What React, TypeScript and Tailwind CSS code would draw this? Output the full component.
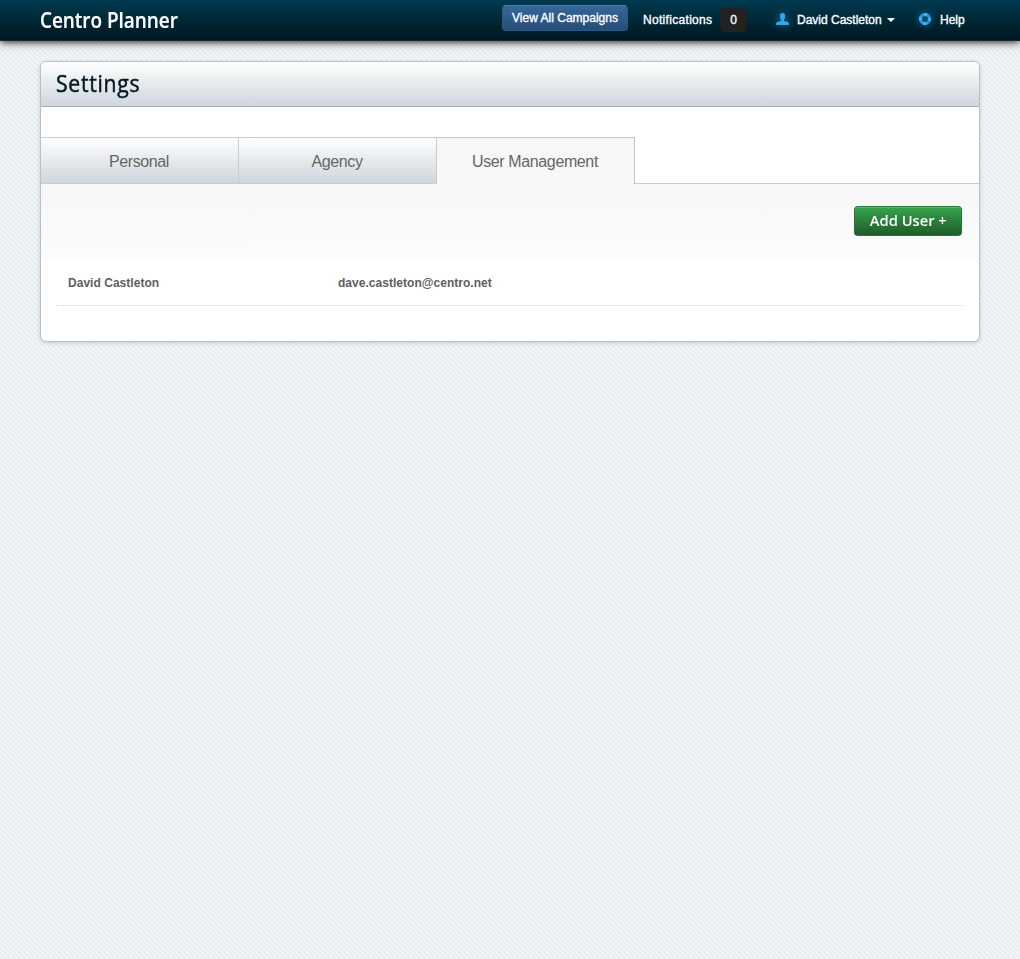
import React from 'react';

const tabs = ['Personal', 'Agency', 'User Management'];
const users = [{ name: 'David Castleton', email: 'dave.castleton@centro.net' }];

function Header() {
  return (
    <header className="relative flex h-[41px] shrink-0 items-start border-b border-[#252525] bg-gradient-to-b from-[#003a50] to-[#001720] px-10 text-white shadow-[0_1px_8px_rgba(0,0,0,0.9)]">
      <h1 className="h-10 w-[462px] origin-left scale-x-[0.9] whitespace-nowrap font-['Open_Sans',sans-serif] text-[21px] font-semibold leading-[40px] [-webkit-text-stroke:0.2px_white]">
        Centro Planner
      </h1>
      <nav className="flex items-start whitespace-nowrap text-[12px] leading-[40px] [-webkit-text-stroke:0.35px_white]">
        <a className="mt-[5px] flex h-[26px] w-[126px] items-center justify-center rounded-[4px] border border-[#2c5a84] border-t-[#4d7ba3] bg-gradient-to-b from-[#35689a] to-[#264e75] leading-[24px]">
          View All Campaigns
        </a>
        <span className="ml-[15px] w-[77px] tracking-[0.31px]">Notifications</span>
        <span className="mt-2 flex h-6 w-[27px] items-center justify-center rounded-[5px] bg-[#222] leading-6">0</span>
        <svg className="ml-[29px] mt-[13px] drop-shadow-[0_0_4px_#0878b8]" width="13" height="12" viewBox="0 0 13 12" fill="#35a5ee">
          <path d="M4 2Q4 0 6.5 0T9 2V4Q9 6 8 6.5V8L12 9Q13 9.5 13 12H0Q0 9.500 1 9L5 8V6.500Q4 6 4 4Z" />
        </svg>
        <span className="ml-2 w-[90px]">David Castleton</span>
        <svg className="mt-[18px]" width="8" height="4" viewBox="0 0 8 4" fill="white"><path d="M0 0H8L4 4Z" /></svg>
        <svg className="ml-6 mt-[13px] drop-shadow-[0_0_3px_#0878b8]" width="12" height="12" viewBox="0 0 12 12" fill="none">
          <circle cx="6" cy="6" r="4.500" stroke="#2c94dc" strokeWidth="3" />
          <circle cx="6" cy="6" r="4.500" stroke="#46aff0" strokeWidth="3" strokeDasharray="3.530 3.538" strokeDashoffset="1.760" />
        </svg>
        <span className="ml-[9px]">Help</span>
      </nav>
    </header>
  );
}

export default function App() {
  return (
    <div className="flex min-h-[959px] w-full flex-col bg-[#ebeff2] bg-[repeating-linear-gradient(45deg,#e9eef1_0px,#e9eef1_2px,#f3f6f8_2px,#f3f6f8_3.5355px)] font-['Liberation_Sans',Arial,sans-serif]">
      <Header />
      <main className="mx-10 mt-5 h-[281px] overflow-hidden rounded-[6px] border border-[#b9c0c5] bg-white shadow-[0_1px_4px_rgba(0,0,0,0.16)]">
        <div className="h-[45px] border-b border-[#a0abb3] bg-gradient-to-b from-white via-[#e6eaec] to-[#cfd6df] pl-[15px]">
          <h2 className="origin-left scale-x-[0.92] whitespace-nowrap font-['Open_Sans',sans-serif] text-[23px] font-normal leading-[42px] tracking-[0.8px] text-[#001b24] [-webkit-text-stroke:0.5px_#001b24]">Settings</h2>
        </div>
        <div className="mt-[30px] flex h-[47px]">
          {tabs.map((tab, index) => (
            <button key={tab} className={index === 2
              ? 'w-[198px] border-r border-t border-[#bdc6cd] bg-[#f7f7f7] pr-px pt-px text-[16px] leading-[46px] tracking-[-0.38px] text-[#666]'
              : 'w-[198px] border-y border-r border-[#c9cccf] bg-gradient-to-b from-white via-[#e6eaec] to-[#cfd6df] pr-px pt-px text-[16px] leading-[45px] tracking-[-0.38px] text-[#666]'}>
              {tab}
            </button>
          ))}
          <div className="flex-1 border-b border-[#c9cccf]" />
        </div>
        <div className="flex h-[77px] justify-end bg-gradient-to-b from-[#f7f7f7] to-[#fcfcfc] pr-[17px] pt-[22px]">
          <button className="flex h-[30px] w-[108px] items-center justify-center whitespace-nowrap rounded-[4px] border border-[#247334] border-t-[#247a36] bg-gradient-to-b from-[#37a44b] to-[#205d2a] pb-0.5 font-['Open_Sans',sans-serif] text-[15px] font-semibold text-white shadow-[inset_0_1px_0_#5bb76a]">
            <span className="scale-x-[0.98]">Add User +</span>
          </button>
        </div>
        {users.map(user => (
          <div key={user.email} className="mx-[15px] flex h-[45px] border-b border-dotted border-[#d5d5d5] pl-3 text-[12px] font-bold leading-[44px] tracking-[0.03px] text-[#5f5f5f]">
            <span className="w-[270px]">{user.name}</span>
            <span>{user.email}</span>
          </div>
        ))}
      </main>
    </div>
  );
}
